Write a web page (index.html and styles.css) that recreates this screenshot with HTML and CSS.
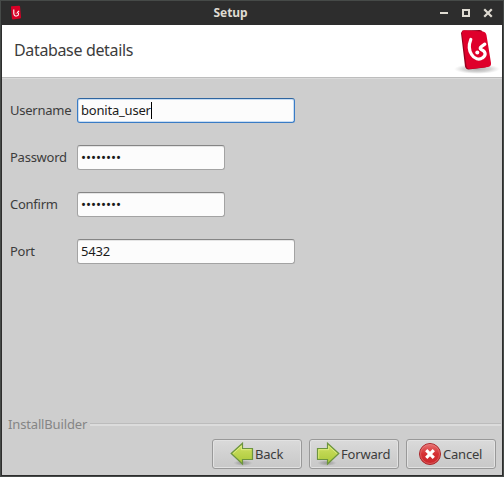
FILE: index.html
```html
<!DOCTYPE html>
<html lang="en">
<head>
<meta charset="utf-8">
<title>Setup</title>
<link rel="stylesheet" href="styles.css">
</head>
<body>
<svg width="0" height="0" class="defs" aria-hidden="true">
  <defs>
    <linearGradient id="green" x1="0" y1="0" x2="0" y2="1"><stop offset="0" stop-color="#d2e266"/><stop offset="1" stop-color="#a9c838"/></linearGradient>
    <linearGradient id="red" x1="0" y1="0" x2="0" y2="1"><stop offset="0" stop-color="#e87474"/><stop offset=".5" stop-color="#d52f33"/><stop offset="1" stop-color="#c9282d"/></linearGradient>
    <radialGradient id="shade"><stop offset="0" stop-color="#777" stop-opacity=".6"/><stop offset=".6" stop-color="#888" stop-opacity=".35"/><stop offset="1" stop-color="#aaa" stop-opacity="0"/></radialGradient>
  </defs>
</svg>
<div class="window">
  <header class="titlebar">
    <svg class="app-icon" width="12" height="16" viewBox="0 0 12 16"><path d="M1.4 1.2 9 .8q1 0 1.100 1L11 12.500q0 1-1 1L3 14.500q-1 0-1.100-1L1 2.200q0-.8.400-1z" fill="#d90026"/><path d="M3.800 4.500v4q.4 3 3 2.500 2-.5 1.700-2.200L7.500 7.400 9 5.800M5.800 8.300h.7" fill="none" stroke="#fff" stroke-width="1.100"/></svg>
    <span class="title">Setup</span>
    <svg class="controls" width="54" height="10" viewBox="0 0 54 10"><path d="M0 4h8v2H0z" fill="#dfdbd2"/><path d="M23 2h6v6h-6z" fill="none" stroke="#dfdbd2" stroke-width="2"/><path d="m45 2 6 6m0-6-6 6" stroke="#dfdbd2" stroke-width="2.200" stroke-linecap="square"/></svg>
  </header>
  <section class="banner">
    <h1>Database details</h1>
    <svg class="logo" width="48" height="48" viewBox="0 0 48 48">
      <ellipse cx="24" cy="42" rx="23" ry="5" fill="url(#shade)"/>
      <path d="m8 6 1.500-2.500 17-.4q3 0 3.400 3L35 37q.2 3-3 3.500L15.500 42.500q-2.500 0-3.500-3z" fill="#96001e"/>
      <path d="M11.500 3.200 29 4.600q4 .3 4.500 3.700L38 36q.4 3.500-3 4L17 42q-3 .2-3.500-3L9 6.500q-.2-3.300 2.500-3.300z" fill="#df002b"/>
      <path d="M17.800 12.500c-2 5-1.800 11 .8 15 2.600 4.500 7.500 5.800 11 3.300 4-2.600 3-6.600-1.400-8.300q-2-1 0-2.700l3.600-2.700" fill="none" stroke="#fff" stroke-width="3.200" stroke-linecap="round"/>
      <circle cx="24.300" cy="25.500" r="2" fill="#fff"/>
    </svg>
  </section>
  <main class="form">
    <label>Username</label><div class="field focused">bonita_user<i class="caret"></i></div>
    <label>Password</label><div class="field short dots">••••••••</div>
    <label>Confirm</label><div class="field short dots">••••••••</div>
    <label>Port</label><div class="field">5432</div>
  </main>
  <div class="brand"><span>InstallBuilder</span></div>
  <footer class="actions">
    <button class="back"><svg width="24" height="24" viewBox="0 0 24 24"><ellipse cx="13" cy="21" rx="10" ry="3" fill="url(#shade)"/><path d="M1.200 11.500 12.500 1.200V6.500H22.500V17.500H12.500V22z" fill="url(#green)" stroke="#6c9440" stroke-width="1.200"/><path d="M3.200 11.500 11.400 4V7.700H21.300" fill="none" stroke="#e7f391" opacity=".7"/></svg><span>Back</span></button>
    <button class="forward"><svg width="24" height="24" viewBox="0 0 24 24"><ellipse cx="11" cy="21" rx="10" ry="3" fill="url(#shade)"/><path d="M22.800 11.500 11.500 1.200V6.500H1.500V17.500H11.500V22z" fill="url(#green)" stroke="#6c9440" stroke-width="1.200"/><path d="M20.800 11.500 12.600 4V7.700H2.700V16.500" fill="none" stroke="#e7f391" opacity=".7"/></svg><span>Forward</span></button>
    <button class="cancel"><svg width="24" height="24" viewBox="0 0 24 24"><circle cx="12" cy="12" r="10.500" fill="url(#red)" stroke="#a9272b"/><circle cx="12" cy="12" r="9.500" fill="none" stroke="#f09090" opacity=".45"/><path d="m8.200 8.200 7.600 7.600m0-7.600-7.600 7.600" stroke="#fff" stroke-width="3.200"/></svg><span>Cancel</span></button>
  </footer>
</div>
</body>
</html>
```
FILE: styles.css
```css
* { box-sizing: border-box; }
body { margin: 0; background: #2d2d2d; font: 13px/18px "Noto Sans", sans-serif; letter-spacing: -.2px; color: #3c3c3c; }
.defs { position: absolute; }
.window { width: 504px; height: 477px; display: flex; flex-direction: column; border: solid #2d2d2d; border-width: 0 2px 2px; outline: 1px solid #464a48; outline-offset: -1px; background: #cecece; }
.titlebar { flex: none; height: 25px; display: grid; grid-template-columns: 60px 1fr 60px; align-items: center; background: #2d2d2d; border-top: 1px solid #464a48; }
.app-icon { margin-left: 8px; }
.title { justify-self: center; margin-right: 43px; font-weight: 700; font-size: 12px; letter-spacing: -.1px; color: #dfdbd2; }
.controls { justify-self: start; margin-left: -2px; margin-bottom: 1px; }
.banner { flex: none; height: 53px; display: flex; align-items: flex-start; justify-content: space-between; padding: 2px 1px 0 12px; background: #fff; border-bottom: 1px solid #bdbdbd; box-shadow: 0 1px #dadada; }
h1 { margin: 12px 0 0; font-size: 16px; line-height: 22px; font-weight: 400; letter-spacing: -.35px; }
.logo { display: block; }
.form { display: grid; grid-template-columns: 67px 1fr; grid-auto-rows: 25px; row-gap: 22px; align-items: center; padding: 20px 8px 0; }
.form label { padding-bottom: 1px; letter-spacing: -.25px; }
.field { width: 218px; height: 25px; padding: 2px 3px 0; border: 1px solid #a3a3a3; border-top-color: #858585; border-radius: 3px; background: #fcfcfc; box-shadow: inset 0 1px #e5e5e5; color: #1a1a1a; display: flex; }
.field.short { width: 148px; }
.field.dots { padding-top: 2px; font-size: 13.33px; letter-spacing: 0; }
.focused { border-color: #397bc5; border-top-color: #2f659f; box-shadow: inset 0 0 0 1px #c8ddf3; }
.caret { width: 1px; height: 17px; margin-top: 1px; background: #000; }
.brand { flex: none; margin-top: auto; height: 18px; padding: 0 1px 0 6px; display: flex; align-items: center; gap: 3px; color: #858585; letter-spacing: -.15px; }
.brand::after { content: ""; flex: 1; height: 2px; background: #dcdcdc; border-top: 1px solid #bcbcbc; }
.actions { flex: none; display: flex; justify-content: flex-end; gap: 7px; padding: 6px; }
button { width: 90px; height: 30px; padding: 0; display: flex; align-items: center; justify-content: flex-start; border: 1px solid #999; border-radius: 3px; background: linear-gradient(#dadada, #c8c8c8); box-shadow: inset 0 0 0 1px #e2e2e2; font: inherit; letter-spacing: inherit; color: #3c3c3c; }
button span { padding-bottom: 1px; }
.back { padding-left: 17px; gap: 1px; }
.forward { padding-left: 6px; gap: 1px; }
.cancel { padding-left: 11px; gap: 1px; }
```
